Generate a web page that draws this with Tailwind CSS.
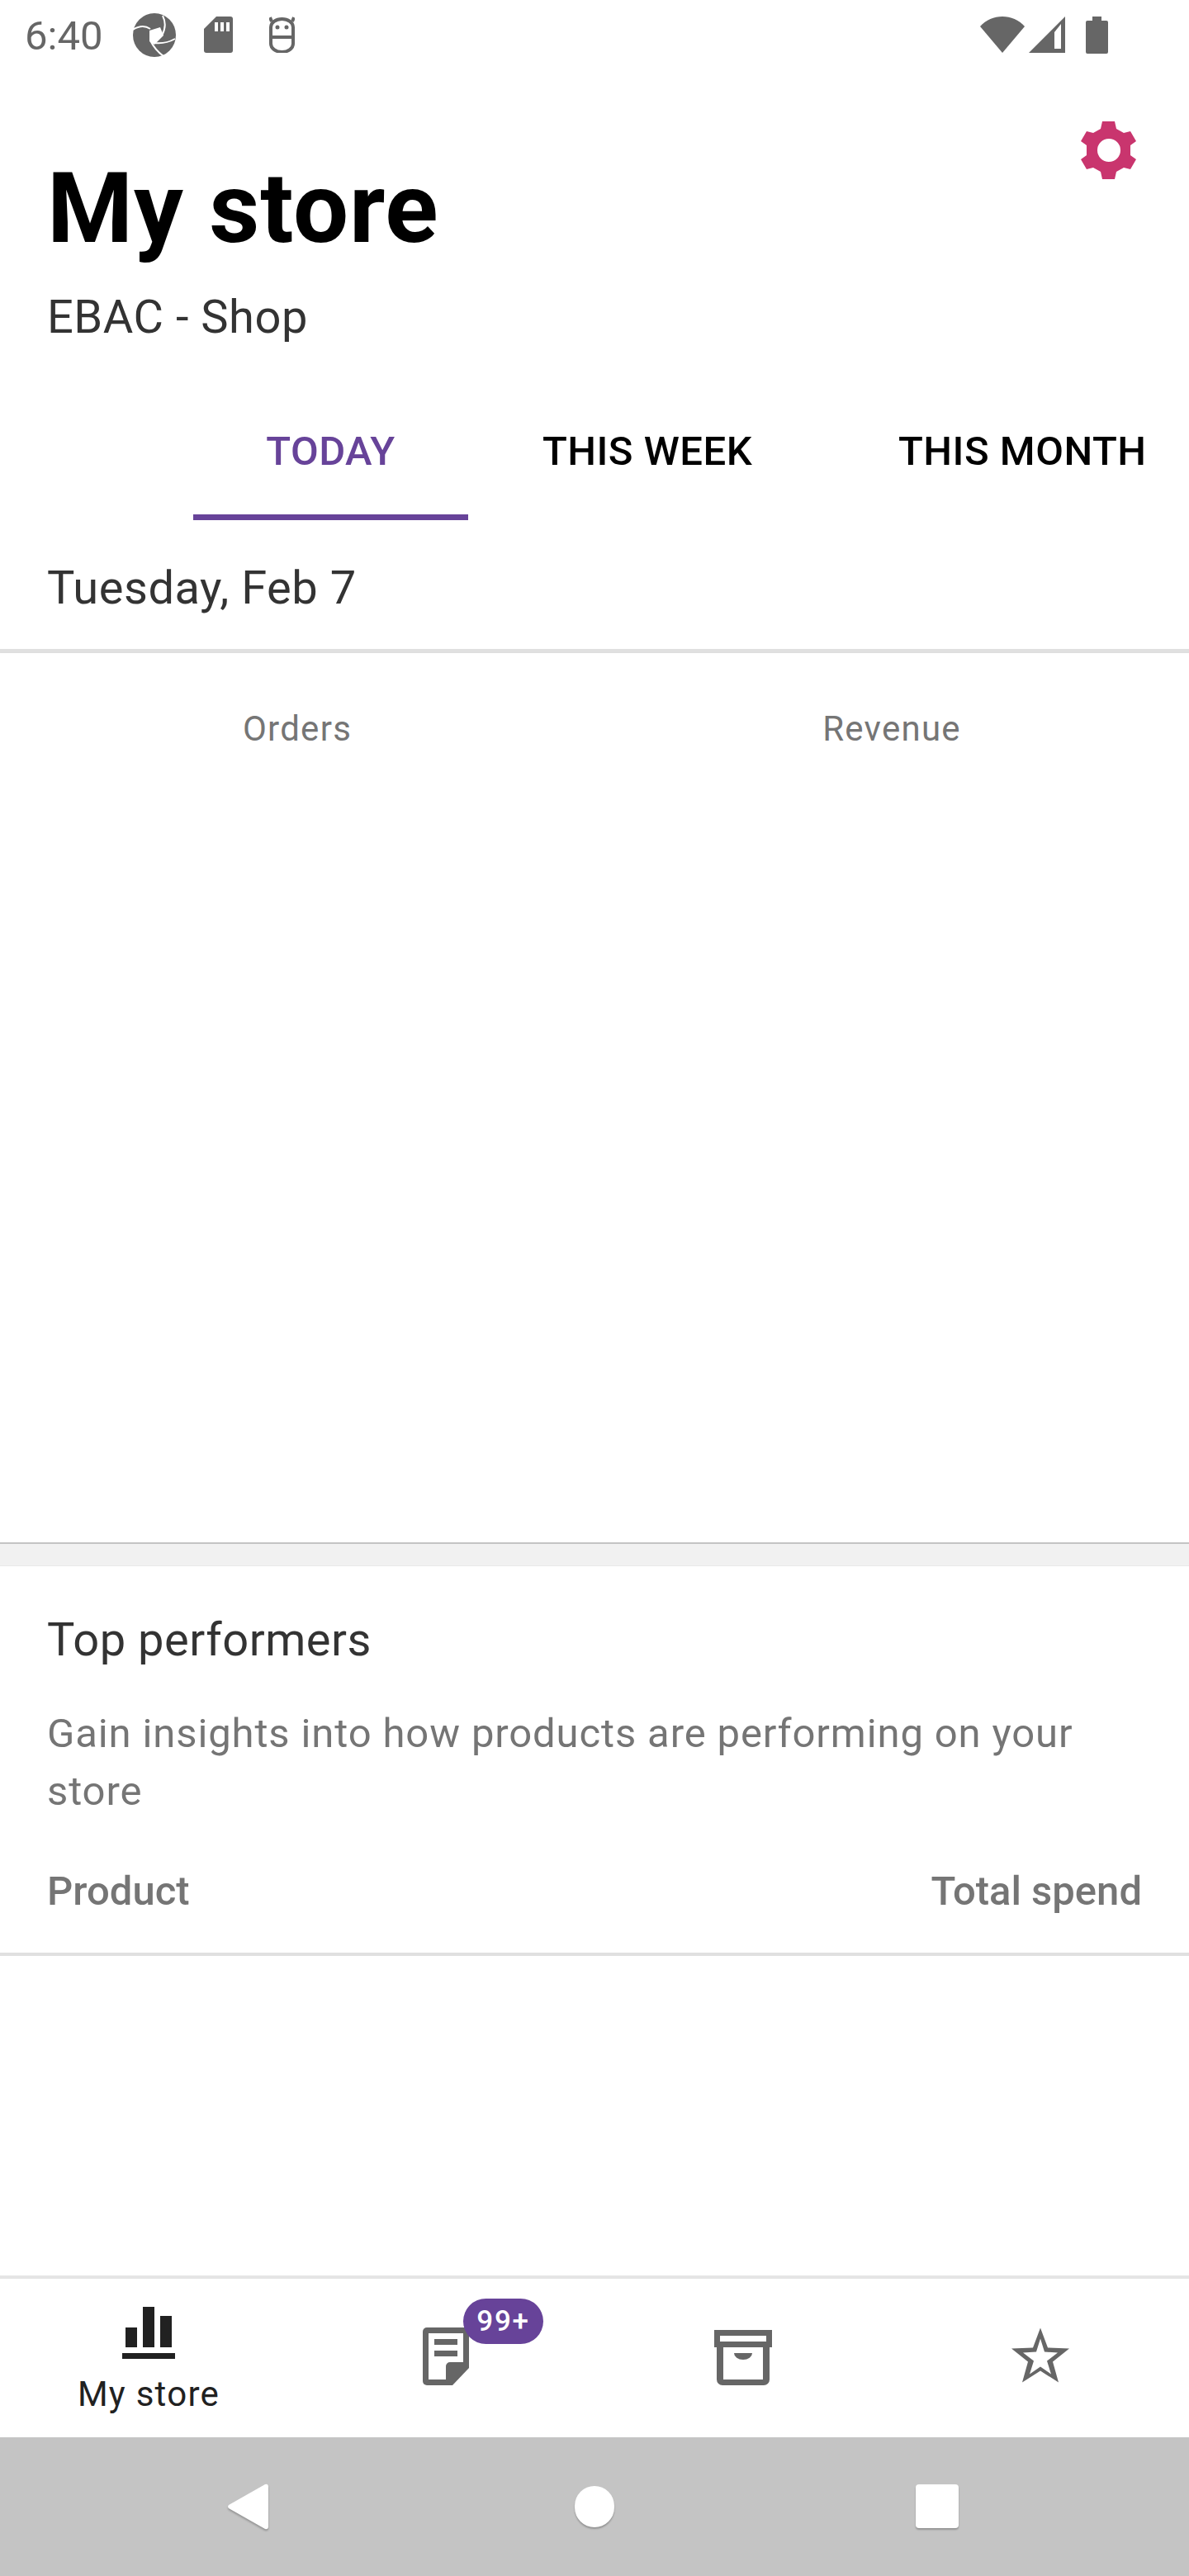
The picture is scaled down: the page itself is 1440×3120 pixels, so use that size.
<!DOCTYPE html>
<html lang="en">
<head>
    <meta charset="UTF-8">
    <meta name="viewport" content="width=device-width, initial-scale=1.0">
    <title>My store</title>
    <script src="https://cdn.jsdelivr.net/npm/@tailwindcss/browser@4"></script>
</head>
<body class="bg-white font-['Roboto',sans-serif]">
<div class="w-[1440px] h-[3120px] flex flex-col overflow-hidden">

    <!-- Status bar -->
    <div class="h-[84px] flex items-center justify-between pl-[30px] pr-[98px] text-[#666666] shrink-0">
        <div class="flex items-center">
            <span class="text-[49px] leading-[78px] mt-[4px] w-[131px]">6:40</span>
            <svg class="w-[52px] h-[53px]" viewBox="0 0 52 53">
                <ellipse cx="26" cy="26.5" rx="26" ry="26.5" fill="#666666"/>
                <path d="M0 20C8 15 15 15 21 19M36 3C40 11 39 20 35 27M51 31C42 36 34 37 26 36M37 52C30 47 25 41 21 33" stroke="#fff" stroke-width="2" fill="none"/>
                <path d="M20 21 33 17 37 27 26 38 20 34Z" fill="#fff"/>
            </svg>
            <svg class="w-[35px] h-[44px] ml-[34px]" viewBox="0 0 35 44"><path d="M15 0H32a3 3 0 0 1 3 3V41a3 3 0 0 1-3 3H3a3 3 0 0 1-3-3V15Z" fill="#666666"/><path d="M13 7h4v11h-4ZM20 7h4v11h-4ZM27 7h4v11h-4Z" fill="#fff"/></svg>
            <svg class="w-[31px] h-[44px] ml-[44px]" viewBox="0 0 31 44"><path d="M2 25H29M2 25V33a13.5 10 0 0 0 27 0V25M2 25V13a13.5 10 0 0 1 27 0V25" stroke="#666666" stroke-width="4" fill="none"/><path d="M3 6 1 1M28 6 30 1" stroke="#666666" stroke-width="4"/><circle cx="10" cy="13" r="2.5" fill="#666666"/><circle cx="21" cy="13" r="2.5" fill="#666666"/></svg>
        </div>
        <div class="flex items-center">
            <svg class="w-[54px] h-[44px]" viewBox="0 0 54 44"><path d="M0 12C14-4 40-4 54 12L27 44Z" fill="#666666"/></svg>
            <svg class="w-[44px] h-[44px] ml-[5px]" viewBox="0 0 44 44"><path d="M44 0V44H0Z" fill="#666666"/><path d="M31 19 39 9V39H31Z" fill="#fff"/></svg>
            <svg class="w-[27px] h-[45px] ml-[25px]" viewBox="0 0 27 45"><path d="M8 0H19V5H25a2 2 0 0 1 2 2V43a2 2 0 0 1-2 2H2a2 2 0 0 1-2-2V7a2 2 0 0 1 2-2H8Z" fill="#666666"/></svg>
        </div>
    </div>

    <!-- Header -->
    <div class="relative h-[386px] shrink-0 pl-[57px] pt-[99px]">
        <h1 class="text-[119px] leading-[140px] font-bold text-black tracking-[0.0074em]">My store</h1>
        <p class="text-[56px] leading-[66px] text-[#333333] tracking-[0.0094em] mt-[28px]">EBAC - Shop</p>
        <svg class="absolute left-[1309px] top-[63px] w-[68px] h-[70px]" viewBox="0 0 68 70"><path fill="#c9356e" fill-rule="evenodd" d="M26 0H41L43 9 52 14 60 12 67 24 60 29V41L67 46 60 58 52 56 43 61 41 70H26L24 61 15 56 7 58 0 46 7 41V29L0 24 7 12 15 14 24 9ZM34 21a14 14 0 1 0 0 28a14 14 0 1 0 0-28Z"/></svg>
    </div>

    <!-- Period tabs -->
    <div class="h-[160px] shrink-0 flex text-[49px] leading-[58px] font-medium tracking-[0.01em] text-black overflow-hidden whitespace-nowrap">
        <div class="w-[234px] shrink-0"></div>
        <div class="w-[333px] shrink-0 flex justify-center pt-[48px] text-[#674399] border-b-[7px] border-[#674399]">TODAY</div>
        <div class="w-[434px] shrink-0 flex justify-center pt-[48px]">THIS WEEK</div>
        <div class="pl-[87px] pt-[48px]">THIS MONTH</div>
    </div>

    <!-- Date -->
    <div class="h-[161px] shrink-0 pl-[57px] pt-[49px] text-[56px] leading-[66px] text-[#333333] tracking-[0.0094em] border-b-[5px] border-[#e0e0e0]">Tuesday, Feb 7</div>

    <!-- Stats -->
    <div class="h-[1079px] shrink-0 grid grid-cols-2 content-start pt-[67px] text-center text-[42px] leading-[50px] text-[#757575] tracking-[0.03em] border-b-2 border-[#c4c4c4] shadow-[0_2px_3px_rgba(0,0,0,0.2)]">
        <span>Orders</span>
        <span>Revenue</span>
    </div>

    <div class="h-[27px] shrink-0 bg-[#f1f1f1] border-b border-[#e8e8e8]"></div>

    <!-- Top performers -->
    <div class="h-[472px] shrink-0 px-[57px] pt-[56px] border-b-[4px] border-[#e0e0e0]">
        <h2 class="text-[56px] leading-[66px] text-[#333333] tracking-[0.0094em]">Top performers</h2>
        <p class="text-[49px] leading-[70px] tracking-[0.0178em] text-[#757575] mt-[46px]">Gain insights into how products are performing on your store</p>
        <div class="flex justify-between text-[49px] leading-[58px] font-medium text-[#757575] mt-[57px]">
            <span>Product</span>
            <span>Total spend</span>
        </div>
    </div>

    <div class="flex-1"></div>

    <!-- Bottom navigation -->
    <div class="h-[196px] shrink-0 grid grid-cols-4 border-t-[4px] border-[#e5e5e5]">
        <div class="flex flex-col items-center">
            <svg class="w-[64px] h-[64px] mt-[34px]" viewBox="0 0 64 64"><path fill="#212121" d="M4 25H18V49H4ZM25 0H39V49H25ZM46 11H60V49H46ZM0 56H64V63H0Z"/></svg>
            <span class="text-[42px] leading-[50px] text-[#212121] tracking-[0.03em] mt-[17px]">My store</span>
        </div>
        <div class="flex justify-center relative">
            <svg class="w-[56px] h-[70px] mt-[59px]" viewBox="0 0 56 70"><path fill="#666666" d="M5 0H56V49L36 70H5a5 5 0 0 1-5-5V5a5 5 0 0 1 5-5Z"/><path fill="#fff" d="M7 7H49V42H33a5 5 0 0 0-5 5V63H7Z"/><path fill="#666666" d="M14 14H42V21H14ZM14 28H42V35H14Z"/></svg>
            <span class="absolute left-[201px] top-[24px] w-[97px] h-[55px] rounded-full bg-[#674399] text-white text-[35px] leading-[55px] font-medium tracking-[0.05em] text-center">99+</span>
        </div>
        <div class="flex justify-center">
            <svg class="w-[70px] h-[67px] mt-[62px]" viewBox="0 0 70 67"><path fill="#666666" d="M0 0H70V21H67V60a7 7 0 0 1-7 7H10a7 7 0 0 1-7-7V21H0Z"/><path fill="#fff" d="M7 7H63V14H7ZM11 21H59V60H11Z"/><path fill="#666666" d="M24 28H46A11 8 0 0 1 24 28Z"/></svg>
        </div>
        <div class="flex justify-center">
            <svg class="w-[70px] h-[67px] mt-[59px]" viewBox="0 0 70 66"><path fill="#666666" d="M35 0 44 24 70 25 50 41 57 66 35 52 13 66 20 41 0 25 26 24Z"/><path fill="#fff" d="M35 13 40 29 56 30 43 40 48 56 35 47 22 56 27 40 14 30 30 29Z"/></svg>
        </div>
    </div>

    <!-- Android nav bar -->
    <div class="h-[168px] shrink-0 bg-[#c4c4c4] relative">
        <svg class="absolute left-[275px] top-[56px] w-[50px] h-[56px] drop-shadow-[0_2px_1px_rgba(0,0,0,0.25)]" viewBox="0 0 50 56"><path fill="#fff" d="M46 1a3 3 0 0 1 4 2V53a3 3 0 0 1-4 2L2 30a3 3 0 0 1 0-4Z"/></svg>
        <div class="absolute left-[696px] top-[59px] w-[48px] h-[50px] rounded-full bg-white shadow-[0_2px_2px_rgba(0,0,0,0.25)]"></div>
        <div class="absolute left-[1109px] top-[57px] w-[52px] h-[53px] rounded-[4px] bg-white shadow-[0_2px_2px_rgba(0,0,0,0.25)]"></div>
    </div>
</div>
</body>
</html>
